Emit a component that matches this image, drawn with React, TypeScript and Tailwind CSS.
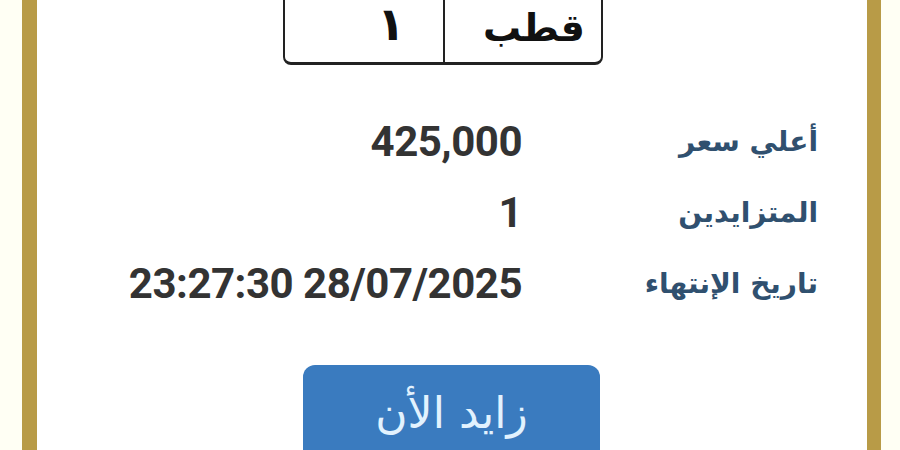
import React from "react";

const rows = [
  { label: "أعلي سعر", value: "425,000" },
  { label: "المتزايدين", value: "1" },
  { label: "تاريخ الإنتهاء", value: "23:27:30 28/07/2025" },
];

export default function App() {
  return (
    <div className="w-[900px] h-[450px] overflow-hidden bg-[#fffff4]">
      <div className="ml-[22px] w-[859px] h-[450px] overflow-hidden border-l-[15px] border-r-[14px] border-[#b89b47] bg-white flex flex-col">
        <div className="shrink-0 ml-[246px] mt-[-30px] h-[95px] w-[320px] border-2 border-b-[3px] border-[#222] rounded-b-[8px] flex bg-white">
          <div className="w-[160px] h-full border-r-2 border-[#222] flex items-end justify-end pr-[38px] pb-[15px]">
            <span className="text-[46px] leading-none font-bold text-[#111]" style={{ fontFamily: '"DejaVu Sans", sans-serif' }}>١</span>
          </div>
          <div className="flex-1 h-full flex items-end justify-end pr-[16px] pb-[15px]" dir="ltr">
            <span className="text-[38px] leading-none font-bold text-[#111]" dir="rtl" style={{ fontFamily: '"DejaVu Serif", "DejaVu Sans", serif' }}>قطب</span>
          </div>
        </div>
        <div className="shrink-0 mt-[41px] flex flex-col">
          {rows.map((r) => (
            <div key={r.label} className="shrink-0 h-[71px] flex items-center">
              <div className="w-[485px] text-right text-[42px] leading-none font-bold text-[#333] tracking-[-0.5px]" style={{ fontFamily: 'Roboto, "Liberation Sans", sans-serif' }}>
                {r.value}
              </div>
              <div className="w-[296px] text-right text-[28px] leading-none font-bold text-[#30506f]" dir="rtl" style={{ fontFamily: '"DejaVu Sans", sans-serif' }}>
                {r.label}
              </div>
            </div>
          ))}
        </div>
        <div className="shrink-0 ml-[266px] mt-[46px] w-[297px] h-[110px] rounded-[12px] bg-[#3a7bbf] flex justify-center pt-[26px]">
          <span className="text-[44px] leading-none text-[#e2f2fe]" dir="rtl" style={{ fontFamily: '"DejaVu Sans", sans-serif' }}>زايد الأن</span>
        </div>
      </div>
    </div>
  );
}
